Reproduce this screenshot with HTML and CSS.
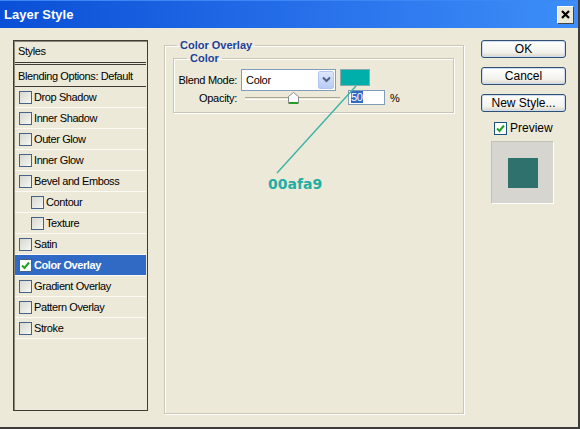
FILE: index.html
```html
<!DOCTYPE html>
<html lang="en">
<head>
	<meta charset="UTF-8">
	<title>Layer Style</title>
	<link rel="stylesheet" href="styles.css">
</head>
<body>
	<div id="win">
		<div class="titlebar">
			<span class="title">Layer Style</span>
			<span class="close">
				<svg width="9" height="9" viewBox="0 0 9 9"><path d="M1 1L8 8M8 1L1 8" stroke="#000" stroke-width="2.2"/></svg>
			</span>
		</div>
		<div class="content">
			<div class="styles">
				<div class="row head">Styles</div>
				<div class="row blend">Blending Options: Default</div>
				<div class="row"><span class="box"></span>Drop Shadow</div>
				<div class="row"><span class="box"></span>Inner Shadow</div>
				<div class="row"><span class="box"></span>Outer Glow</div>
				<div class="row"><span class="box"></span>Inner Glow</div>
				<div class="row"><span class="box"></span>Bevel and Emboss</div>
				<div class="row sub"><span class="box"></span>Contour</div>
				<div class="row sub"><span class="box"></span>Texture</div>
				<div class="row"><span class="box"></span>Satin</div>
				<div class="row active"><span class="box on"><svg width="9" height="9" viewBox="0 0 9 9"><path d="M1 4.5L3.5 7L8 1.5" fill="none" stroke="#21a121" stroke-width="2"/></svg></span>Color Overlay</div>
				<div class="row"><span class="box"></span>Gradient Overlay</div>
				<div class="row"><span class="box"></span>Pattern Overlay</div>
				<div class="row"><span class="box"></span>Stroke</div>
			</div>

			<fieldset class="group outer">
				<legend>Color Overlay</legend>
				<fieldset class="group inner">
					<legend>Color</legend>
					<div class="field">
						<label>Blend Mode:</label>
						<div class="select">
							<span>Color</span>
							<span class="arrow"><svg width="9" height="7" viewBox="0 0 9 7"><path d="M1 1.5L4.5 5L8 1.5" fill="none" stroke="#4d6185" stroke-width="2"/></svg></span>
						</div>
						<div class="swatch"></div>
					</div>
					<div class="field">
						<label>Opacity:</label>
						<div class="slider">
							<div class="track"></div>
							<svg class="thumb" width="11" height="12" viewBox="0 0 11 12"><path d="M0.5 11.5V4.5L5.5 0.5L10.5 4.5V11.5Z" fill="#fff" stroke="#8c8c8c"/><path d="M1 11H10" stroke="#21a121" stroke-width="2"/></svg>
						</div>
						<div class="input"><span class="sel">50</span></div>
						<span class="pct">%</span>
					</div>
				</fieldset>
			</fieldset>

			<div class="side">
				<div class="btn">OK</div>
				<div class="btn">Cancel</div>
				<div class="btn">New Style...</div>
				<div class="check"><span class="box on"><svg width="9" height="9" viewBox="0 0 9 9"><path d="M1 4.5L3.5 7L8 1.5" fill="none" stroke="#21a121" stroke-width="2"/></svg></span>Preview</div>
				<div class="preview"><div class="sample"></div></div>
			</div>
		</div>

		<svg class="pointer" width="580" height="429"><line x1="356" y1="86" x2="277" y2="173" stroke="#3db3a6" stroke-width="1.4"/></svg>
		<div class="hex">00afa9</div>
	</div>
</body>
</html>
```

FILE: styles.css
```css
*{
	margin:0;
	padding:0;
	box-sizing:border-box;
}
body{
	font-family:"Liberation Sans", Arial, sans-serif;
	font-size:11px;
	color:#000;
}
#win{
	width:580px;
	height:429px;
	background:#ece9d8;
	position:relative;
	border-right:2px solid #3c3c3c;
	border-bottom:2px solid #3c3c3c;
	overflow:hidden;
}
.titlebar{
	height:28px;
	background:linear-gradient(to right,#0a4fd6,#2a74ec 60%,#3d8ef8);
	display:flex;
	align-items:center;
	justify-content:space-between;
	padding:0 4px 0 4px;
	border-top:1px solid #3b87f5;
}
.title{
	color:#fff;
	font-weight:bold;
	font-size:13px;
}
.close{
	width:17px;
	height:18px;
	background:#ece9d8;
	border:1px solid #fff;
	border-right-color:#444;
	border-bottom-color:#444;
	display:flex;
	align-items:center;
	justify-content:center;
}
.content{
	display:flex;
	align-items:flex-start;
	padding:12px 0 0 13px;
}

/* left list */
.styles{
	width:135px;
	height:371px;
	border:1px solid #3f3d33;
	box-shadow:inset 1px 1px 0 #8a877a;
	padding:1px 1px 0 1px;
	letter-spacing:-0.4px;
}
.row{
	height:21px;
	display:flex;
	align-items:center;
	padding-left:4px;
	border-bottom:1px solid #fbfaf4;
}
.row.head{
	height:23px;
	padding-left:3px;
	padding-bottom:2px;
	border-bottom:3px double #3f3d33;
}
.row.blend{
	height:22px;
	padding-left:3px;
	border-bottom:1px solid #3f3d33;
}
.row.sub{
	padding-left:16px;
}
.row.active{
	background:#316ac5;
	color:#fff;
	font-weight:bold;
}
.box{
	width:13px;
	height:13px;
	border:1px solid #44628a;
	background:linear-gradient(135deg,#d8d8d2,#f6f6f2);
	margin-right:2px;
	display:flex;
	align-items:center;
	justify-content:center;
	flex-shrink:0;
}
.box.on{
	background:#fff;
}

/* group boxes */
.group{
	border:1px solid #c9c6b5;
	box-shadow:1px 1px 0 #fff, inset 1px 1px 0 #fff;
}
.group legend{
	color:#1d3f9b;
	font-weight:bold;
	font-size:11px;
	line-height:13px;
	padding:0 3px;
}
.outer{
	width:300px;
	height:375px;
	margin:-1px 0 0 16px;
	padding:0 0 0 8px;
}
.outer > legend{
	margin-left:4px;
}
.inner{
	width:281px;
	height:61px;
	padding:4px 0 0 3px;
}
.inner > legend{
	margin-left:10px;
}
.field{
	display:flex;
	align-items:center;
	height:21px;
	letter-spacing:-0.3px;
}
.field + .field{
	height:15px;
}
.field label{
	width:61px;
	white-space:nowrap;
	display:flex;
	justify-content:flex-end;
	padding-right:1px;
}
.select{
	width:95px;
	height:22px;
	margin-left:3px;
	background:#fff;
	border:1px solid #7f9db9;
	display:flex;
	align-items:center;
	justify-content:space-between;
	padding:0 1px 0 4px;
}
.arrow{
	width:16px;
	height:18px;
	background:linear-gradient(#dde7fb,#b7cbf6);
	border:1px solid #b4c6ef;
	border-radius:2px;
	display:flex;
	align-items:center;
	justify-content:center;
}
.swatch{
	width:30px;
	height:17px;
	margin-left:4px;
	margin-top:-4px;
	background:#00afa9;
	border:1px solid #8aa;
}
.slider{
	width:95px;
	height:15px;
	margin-left:7px;
	position:relative;
}
.track{
	margin-top:7px;
	height:3px;
	border-top:1px solid #a8a594;
	border-bottom:1px solid #fff;
}
.thumb{
	position:absolute;
	left:43px;
	top:2px;
}
.input{
	width:37px;
	height:15px;
	margin-left:8px;
	background:#fff;
	border:1px solid #7f9db9;
	padding:0 0 0 2px;
	line-height:13px;
}
.sel{
	background:#316ac5;
	color:#fff;
}
.pct{
	margin-left:5px;
}

/* right side */
.side{
	margin-left:17px;
	display:flex;
	flex-direction:column;
}
.btn{
	width:85px;
	height:18px;
	border:1px solid #2f4f73;
	border-radius:3px;
	background:linear-gradient(#fff,#f3f2ec 70%,#d9d6c8);
	box-shadow:inset 0 0 0 1px #cfdcf0;
	display:flex;
	align-items:center;
	justify-content:center;
	font-size:12px;
	margin-bottom:9px;
}
.check{
	display:flex;
	align-items:center;
	font-size:12px;
	margin:0 0 6px 13px;
}
.check .box{
	margin-right:3px;
	border-color:#1c5180;
}
.preview{
	width:63px;
	height:63px;
	margin-left:10px;
	background:#d6d5d0;
	border:1px solid #c3c1b6;
	border-right-color:#fff;
	border-bottom-color:#fff;
	padding:16px 0 0 16px;
}
.sample{
	width:30px;
	height:30px;
	background:#2f716c;
}

/* annotation */
.pointer{
	position:absolute;
	left:0;
	top:0;
}
.hex{
	position:absolute;
	left:268px;
	top:176px;
	font-family:"DejaVu Sans", Verdana, sans-serif;
	font-weight:bold;
	font-size:14px;
	color:#21aea4;
}
```
